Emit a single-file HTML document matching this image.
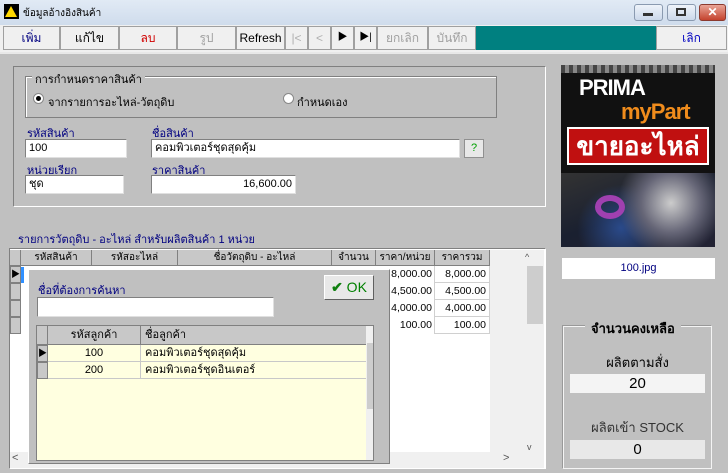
<!DOCTYPE html>
<html><head><meta charset="utf-8"><style>
*{box-sizing:border-box;margin:0;padding:0}
body{width:728px;height:473px;overflow:hidden;background:#c0c0c0;font-family:"Liberation Sans","Noto Sans CJK SC",sans-serif;font-size:11px;position:relative;color:#000}
.a{position:absolute}
.btn{position:absolute;top:26px;height:24px;background:#f0f0f0;border:1px solid #a0a0a0;text-align:center;line-height:22px;font-size:12px}
.sunk{border:1px solid;border-color:#808080 #fff #fff #808080}
.inp{position:absolute;background:#fff;border:1px solid;border-color:#808080 #e0e0e0 #e0e0e0 #808080;height:19px;line-height:17px;padding-left:3px;font-size:11px}
.lbl{position:absolute;color:#000080;font-size:11px}
.th{position:absolute;top:250px;height:16px;background:#c8c8c8;border-right:1px solid #808080;border-bottom:1px solid #808080;text-align:center;font-size:10px;line-height:15px}
.cell{position:absolute;height:17px;border-bottom:1px solid #d0d0d0;border-right:1px solid #d0d0d0;text-align:right;padding-right:3px;line-height:16px;font-size:10.5px;background:#fff}
</style></head><body>
<div class="a" style="left:0;top:0;width:728px;height:25px;background:linear-gradient(#e1eaf5,#cfdcec)"></div>
<div class="a" style="left:4px;top:4px;width:15px;height:15px;background:#000"></div>
<div class="a" style="left:5px;top:6px;width:0;height:0;border-left:6px solid transparent;border-right:6px solid transparent;border-bottom:11px solid #ffd800"></div>
<div class="a" style="left:23px;top:6px;font-size:10px">ข้อมูลอ้างอิงสินค้า</div>
<div class="a" style="left:634px;top:4px;width:29px;height:17px;border:1px solid #8a9ab0;border-radius:3px;background:linear-gradient(#eef3fa,#cbd8ea)"></div>
<div class="a" style="left:643px;top:13px;width:10px;height:3px;background:#333"></div>
<div class="a" style="left:667px;top:4px;width:29px;height:17px;border:1px solid #8a9ab0;border-radius:3px;background:linear-gradient(#eef3fa,#cbd8ea)"></div>
<div class="a" style="left:676px;top:8px;width:10px;height:8px;border:2px solid #333"></div>
<div class="a" style="left:699px;top:4px;width:27px;height:17px;border:1px solid #8b3a2f;border-radius:3px;background:linear-gradient(#e9a496,#c4432e);color:#fff;text-align:center;font-weight:bold;line-height:15px;font-size:12px">✕</div>

<div class="a" style="left:0;top:25px;width:728px;height:27px;background:#f0f0f0"></div>
<div class="btn" style="left:3px;width:57px;color:#000080">เพิ่ม</div>
<div class="btn" style="left:60px;width:59px">แก้ไข</div>
<div class="btn" style="left:119px;width:58px;color:#d00000">ลบ</div>
<div class="btn" style="left:177px;width:59px;color:#a0a0a0">รูป</div>
<div class="btn" style="left:236px;width:49px">Refresh</div>
<div class="btn" style="left:285px;width:23px;color:#b0b0b0">|&lt;</div>
<div class="btn" style="left:308px;width:23px;color:#b0b0b0">&lt;</div>
<div class="btn" style="left:331px;width:23px;font-size:10px">▶</div>
<div class="btn" style="left:354px;width:23px;font-size:10px">▶|</div>
<div class="btn" style="left:377px;width:51px;color:#a0a0a0">ยกเลิก</div>
<div class="btn" style="left:428px;width:48px;color:#a0a0a0">บันทึก</div>
<div class="a" style="left:476px;top:26px;width:180px;height:24px;background:#008080"></div>
<div class="btn" style="left:656px;width:71px;color:#0000c0">เลิก</div>
<div class="a" style="left:0;top:52px;width:728px;height:2px;background:#e8e8e8"></div>

<div class="a sunk" style="left:13px;top:66px;width:533px;height:141px"></div>
<div class="a" style="left:25px;top:76px;width:472px;height:42px;border:1px solid #808080;box-shadow:1px 1px 0 #fff inset"></div>
<div class="a" style="left:32px;top:70px;background:#c0c0c0;padding:0 3px;font-size:11px">การกำหนดราคาสินค้า</div>
<div class="a" style="left:33px;top:93px;width:11px;height:11px;border-radius:50%;background:#fff;border:1px solid #888"></div>
<div class="a" style="left:36px;top:96px;width:5px;height:5px;border-radius:50%;background:#000"></div>
<div class="a" style="left:48px;top:93px">จากรายการอะไหล่-วัตถุดิบ</div>
<div class="a" style="left:283px;top:93px;width:11px;height:11px;border-radius:50%;background:#fff;border:1px solid #888"></div>
<div class="a" style="left:297px;top:93px">กำหนดเอง</div>

<div class="lbl" style="left:27px;top:124px">รหัสสินค้า</div>
<div class="inp" style="left:25px;top:139px;width:102px">100</div>
<div class="lbl" style="left:152px;top:124px">ชื่อสินค้า</div>
<div class="inp" style="left:151px;top:139px;width:309px">คอมพิวเตอร์ชุดสุดคุ้ม</div>
<div class="a" style="left:464px;top:139px;width:20px;height:19px;background:#e8e8e8;border:1px solid #909090;color:#00a000;text-align:center;line-height:17px">?</div>
<div class="lbl" style="left:27px;top:161px">หน่วยเรียก</div>
<div class="inp" style="left:25px;top:175px;width:99px">ชุด</div>
<div class="lbl" style="left:152px;top:161px">ราคาสินค้า</div>
<div class="inp" style="left:151px;top:175px;width:145px;text-align:right;padding-right:3px">16,600.00</div>

<div class="lbl" style="left:18px;top:230px;font-size:11px">รายการวัตถุดิบ - อะไหล่ สำหรับผลิตสินค้า 1 หน่วย</div>

<div class="a sunk" style="left:9px;top:248px;width:537px;height:221px;background:#fff"></div>
<div class="th" style="left:10px;width:11px"></div>
<div class="th" style="left:21px;width:71px">รหัสสินค้า</div>
<div class="th" style="left:92px;width:86px">รหัสอะไหล่</div>
<div class="th" style="left:178px;width:154px">ชื่อวัตถุดิบ - อะไหล่</div>
<div class="th" style="left:332px;width:44px">จำนวน</div>
<div class="th" style="left:376px;width:59px">ราคา/หน่วย</div>
<div class="th" style="left:435px;width:55px">ราคารวม</div>
<div class="a" style="left:490px;top:250px;width:54px;height:217px;background:#f0f0f0"></div>
<div class="a" style="left:525px;top:252px;font-size:9px;color:#555">^</div>
<div class="a" style="left:527px;top:266px;width:16px;height:58px;background:#cdcdcd"></div>
<div class="a" style="left:527px;top:442px;font-size:9px;color:#555">v</div>
<div class="a" style="left:10px;top:266px;width:11px;height:17px;background:#c8c8c8;border:1px solid #808080;font-size:9px;line-height:15px">▶</div>
<div class="a" style="left:10px;top:283px;width:11px;height:17px;background:#c8c8c8;border:1px solid #808080"></div>
<div class="a" style="left:10px;top:300px;width:11px;height:17px;background:#c8c8c8;border:1px solid #808080"></div>
<div class="a" style="left:10px;top:317px;width:11px;height:17px;background:#c8c8c8;border:1px solid #808080"></div>
<div class="a" style="left:21px;top:267px;width:3px;height:16px;background:#3090ff"></div>
<div class="a" style="left:376px;top:266px;width:59px;height:68px;background:#fff;text-align:right;padding-right:2px;line-height:17px;font-size:10.5px;border-right:1px solid #d0d0d0">8,000.00<br>4,500.00<br>4,000.00<br>100.00</div>
<div class="cell" style="left:435px;top:266px;width:55px">8,000.00</div>
<div class="cell" style="left:435px;top:283px;width:55px">4,500.00</div>
<div class="cell" style="left:435px;top:300px;width:55px">4,000.00</div>
<div class="cell" style="left:435px;top:317px;width:55px">100.00</div>
<div class="a" style="left:10px;top:452px;width:534px;height:16px;background:#f0f0f0"></div>
<div class="a" style="left:12px;top:452px;font-size:11px;color:#555">&lt;</div>
<div class="a" style="left:503px;top:452px;font-size:11px;color:#555">&gt;</div>

<div class="a" style="left:28px;top:269px;width:362px;height:195px;background:#c0c0c0;border:1px solid;border-color:#fff #808080 #808080 #fff"></div>
<div class="lbl" style="left:38px;top:281px;font-size:11px">ชื่อที่ต้องการค้นหา</div>
<div class="inp" style="left:37px;top:297px;width:237px;height:20px"></div>
<div class="a" style="left:324px;top:275px;width:50px;height:25px;background:#e8e8e8;border:1px solid;border-color:#fff #606060 #606060 #fff;font-size:14px;line-height:23px;text-align:center;color:#008000"><span style="color:#108010;font-weight:bold">✔</span> OK</div>
<div class="a" style="left:36px;top:325px;width:338px;height:136px;background:#ffffe0;border:1px solid #808080"></div>
<div class="a" style="left:37px;top:326px;width:11px;height:19px;background:#c8c8c8;border-right:1px solid #808080;border-bottom:1px solid #808080"></div>
<div class="a" style="left:48px;top:326px;width:93px;height:19px;background:#c8c8c8;border-right:1px solid #808080;border-bottom:1px solid #808080;text-align:center;line-height:18px">รหัสลูกค้า</div>
<div class="a" style="left:141px;top:326px;width:225px;height:19px;background:#c8c8c8;border-bottom:1px solid #808080;padding-left:4px;line-height:18px">ชื่อลูกค้า</div>
<div class="a" style="left:366px;top:326px;width:7px;height:134px;background:#f0f0f0"></div>
<div class="a" style="left:367px;top:343px;width:6px;height:66px;background:#cdcdcd"></div>
<div class="a" style="left:37px;top:345px;width:11px;height:17px;background:#c8c8c8;border:1px solid #808080;font-size:9px;line-height:15px">▶</div>
<div class="a" style="left:37px;top:362px;width:11px;height:17px;background:#c8c8c8;border:1px solid #808080"></div>
<div class="a" style="left:48px;top:345px;width:93px;height:17px;border-right:1px solid #c8c8c8;border-bottom:1px solid #c8c8c8;text-align:center;line-height:16px">100</div>
<div class="a" style="left:141px;top:345px;width:225px;height:17px;border-bottom:1px solid #c8c8c8;padding-left:4px;line-height:16px">คอมพิวเตอร์ชุดสุดคุ้ม</div>
<div class="a" style="left:48px;top:362px;width:93px;height:17px;border-right:1px solid #c8c8c8;border-bottom:1px solid #c8c8c8;text-align:center;line-height:16px">200</div>
<div class="a" style="left:141px;top:362px;width:225px;height:17px;border-bottom:1px solid #c8c8c8;padding-left:4px;line-height:16px">คอมพิวเตอร์ชุดอินเตอร์</div>

<div class="a" style="left:561px;top:65px;width:154px;height:182px;background:#111;overflow:hidden">
<div class="a" style="left:0;top:0;width:154px;height:8px;background:repeating-linear-gradient(90deg,#444 0 4px,#888 4px 8px)"></div>
<div class="a" style="left:18px;top:10px;color:#fff;font-weight:bold;font-size:22px;letter-spacing:-1px">PRIMA</div>
<div class="a" style="left:60px;top:34px;color:#f08c1c;font-weight:bold;font-size:22px;letter-spacing:-1px">myPart</div>
<div class="a" style="left:6px;top:62px;width:142px;height:38px;background:#c01010;border:2px solid #fff;color:#fff;font-weight:bold;font-size:26px;line-height:34px;text-align:center">ขายอะไหล่</div>
<div class="a" style="left:0;top:108px;width:154px;height:74px;background:radial-gradient(circle at 110px 30px,#ccc,#667 25%,transparent 45%),radial-gradient(circle at 60px 55px,#2a4a8a,transparent 40%),linear-gradient(160deg,#333,#1a2030 50%,#223 100%)"></div>
<div class="a" style="left:34px;top:130px;width:30px;height:24px;border-radius:50%;border:6px solid #a040b0"></div>
</div>
<div class="a" style="left:562px;top:258px;width:153px;height:21px;background:#fff;color:#000080;text-align:center;line-height:21px;font-size:11px">100.jpg</div>

<div class="a" style="left:563px;top:326px;width:149px;height:143px;border:1px solid #f4f4f4;box-shadow:-1px -1px 0 #999"></div>
<div class="a" style="left:585px;top:318px;background:#c0c0c0;padding:0 6px;font-weight:bold;font-size:13px">จำนวนคงเหลือ</div>
<div class="a" style="left:563px;top:352px;width:149px;text-align:center;font-size:13px">ผลิตตามสั่ง</div>
<div class="a" style="left:570px;top:374px;width:135px;height:19px;background:#f4f4f4;text-align:center;font-size:15px;line-height:19px">20</div>
<div class="a" style="left:563px;top:417px;width:149px;text-align:center;font-size:13px;color:#333">ผลิตเข้า STOCK</div>
<div class="a" style="left:570px;top:440px;width:135px;height:19px;background:#e8e8e8;text-align:center;font-size:15px;line-height:19px">0</div>
</body></html>
